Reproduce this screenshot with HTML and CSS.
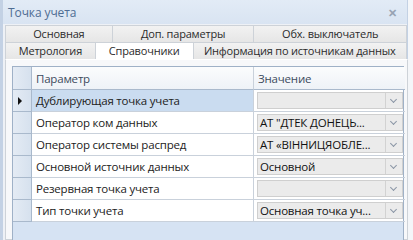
FILE: index.html
```html
<!DOCTYPE html>
<html lang="ru">
<head>
  <meta charset="UTF-8" />
  <title>Точка учета</title>
  <link rel="stylesheet" href="styles.css">
</head>
<body>
  <div class="window">
    <div class="titlebar">
      <span class="title">Точка учета</span>
      <span class="close">&#x2715;</span>
    </div>

    <div class="tabs">
      <div class="tab-row">
        <div class="tab w1">Основная</div>
        <div class="tab w2">Доп. параметры</div>
        <div class="tab w3">Обх. выключатель</div>
      </div>
      <div class="tab-row">
        <div class="tab w4">Метрология</div>
        <div class="tab w5 active">Справочники</div>
        <div class="tab w6">Информация по источникам данных</div>
      </div>
    </div>

    <div class="panel">
      <div class="grid">
        <div class="rh head"></div>
        <div class="cell head">Параметр</div>
        <div class="cell head val">Значение</div>

        <div class="rh current"><span class="arrow"></span></div>
        <div class="cell selected">Дублирующая точка учета</div>
        <div class="cell val"><div class="combo"><span class="combo-text"></span><span class="drop"></span></div></div>

        <div class="rh"></div>
        <div class="cell">Оператор ком данных</div>
        <div class="cell val"><div class="combo"><span class="combo-text">АТ "ДТЕК ДОНЕЦЬ...</span><span class="drop"></span></div></div>

        <div class="rh"></div>
        <div class="cell">Оператор системы распред</div>
        <div class="cell val"><div class="combo"><span class="combo-text">АТ «ВІННИЦЯОБЛЕ...</span><span class="drop"></span></div></div>

        <div class="rh"></div>
        <div class="cell">Основной источник данных</div>
        <div class="cell val"><div class="combo"><span class="combo-text">Основной</span><span class="drop"></span></div></div>

        <div class="rh"></div>
        <div class="cell">Резервная точка учета</div>
        <div class="cell val"><div class="combo"><span class="combo-text"></span><span class="drop"></span></div></div>

        <div class="rh"></div>
        <div class="cell">Тип точки учета</div>
        <div class="cell val"><div class="combo"><span class="combo-text">Основная точка уч...</span><span class="drop"></span></div></div>
      </div>
      <div class="grid-empty"></div>
    </div>
  </div>
</body>
</html>
```

FILE: styles.css
```css
* { margin: 0; padding: 0; box-sizing: border-box; }
body { font-family: 'Open Sans', 'Noto Sans', sans-serif; background: #f4f6f9; width: 413px; height: 240px; overflow: hidden; }

.window {
  width: 408px; height: 240px; background: #eef1f6;
  border-left: 3px solid #c3d1e4; border-right: 1px solid #c3d1e4;
}
.titlebar {
  height: 24px; display: flex; align-items: center; justify-content: space-between;
  padding: 0 10px 0 5px; background: linear-gradient(#e2ebf6, #d9e4f2);
}
.title { font-size: 12px; color: #4f6d93; letter-spacing: -0.1px; }
.close { font-size: 11px; color: #97a3b3; font-weight: 700; }

.tabs { padding: 1px 0 0 2px; }
.tab-row { display: flex; height: 17px; }
.tab {
  font-size: 11px; color: #2b2b2b; text-align: center; line-height: 16px;
  background: linear-gradient(#f2f2f2, #e6e6e6);
  border: 1px solid #cdd2d8; border-left: none; border-bottom: none;
  letter-spacing: -0.2px;
}
.tab:first-child { border-left: 1px solid #cdd2d8; }
.tab.active { background: #fff; }
.w1 { width: 108px; } .w2 { width: 142px; } .w3 { width: 153px; }
.w4 { width: 91px; } .w5 { width: 98px; } .w6 { width: 214px; }

.panel {
  margin: 0 0 0 2px; width: 403px; height: 181px; padding: 6px 3px 0 6px;
  background: #f7f8fa; border: 1px solid #cdd2d8; border-top-color: #fff;
}
.grid {
  display: grid; grid-template-columns: 19px 222px 151px;
  grid-template-rows: 23px repeat(6, 22px);
  border: 1px solid #9fb1c7; border-bottom: none; background: #fff;
}
.rh {
  background: linear-gradient(90deg, #e4ebf4, #d6e1ee);
  border-right: 1px solid #a9b9cc; border-bottom: 1px solid #a9b9cc;
  display: flex; align-items: center; padding-left: 5px;
}
.arrow { width: 0; height: 0; border-top: 4px solid transparent; border-bottom: 4px solid transparent; border-left: 4px solid #111; }
.cell {
  font-size: 11.5px; letter-spacing: -0.2px; color: #222; display: flex; align-items: center; padding-left: 4px;
  border-bottom: 1px solid #c9d1db; border-right: 1px solid #c9d1db; white-space: nowrap; overflow: hidden;
}
.cell.head { background: linear-gradient(#fbfcfd, #eef2f7); color: #3c4b5d; border-bottom-color: #a9b9cc; }
.cell.val { padding: 2px 2px 2px 3px; border-right: none; }
.cell.head.val { padding-left: 4px; }
.cell.selected { background: #cadcf0; }
.combo {
  flex: 1; height: 100%; display: flex; background: #ebebeb; border: 1px solid #cfcfcf;
}
.combo-text { flex: 1; font-size: 11.5px; color: #111; line-height: 16px; padding-left: 2px; }
.drop {
  width: 17px; border-left: 1px solid #d2d2d2; position: relative;
}
.drop::after {
  content: ''; position: absolute; left: 5px; top: 4px; width: 4px; height: 4px;
  border-right: 1px solid #8a96a6; border-bottom: 1px solid #8a96a6; transform: rotate(45deg);
}
.grid-empty {
  height: 19px; background: #d6e3f3; border: 1px solid #9fb1c7; border-top: none;
}
```
